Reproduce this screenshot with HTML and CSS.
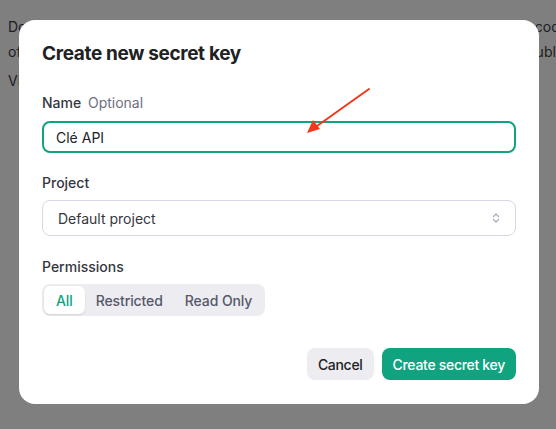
FILE: index.html
```html
<!DOCTYPE html>
<html>
<head>
<meta charset="utf-8">
<link rel="stylesheet" href="styles.css">
</head>
<body>
<div class="page">
  <p class="bg-line bg-line-1"><span>Do not share your API key with others, or expose it in the browser</span><span>code.</span></p>
  <p class="bg-line bg-line-2"><span>of your account, OpenAI may automatically disable any API key that</span><span>publicly.</span></p>
  <p class="bg-line bg-para"><span>View usage per API key on the Usage page.</span></p>
</div>
<div class="overlay">
  <div class="modal">
    <h1 class="title">Create new secret key</h1>
    <div class="field field-name">
      <div class="label">Name <span class="optional">Optional</span></div>
      <div class="input">Clé API</div>
    </div>
    <div class="field field-project">
      <div class="label">Project</div>
      <div class="select">
        <span>Default project</span>
        <svg class="chev" width="10" height="14" viewBox="0 0 10 14"><path d="M2.5 5.5 L5 3 L7.5 5.5 M2.5 8.5 L5 11 L7.5 8.5" fill="none" stroke="#a9a9bd" stroke-width="1.2" stroke-linecap="round" stroke-linejoin="round"/></svg>
      </div>
    </div>
    <div class="field field-perm">
      <div class="label">Permissions</div>
      <div class="segmented">
        <span class="seg seg-active">All</span>
        <span class="seg">Restricted</span>
        <span class="seg">Read Only</span>
      </div>
    </div>
    <div class="actions">
      <button class="btn btn-cancel">Cancel</button>
      <button class="btn btn-primary">Create secret key</button>
    </div>
  </div>
  <svg class="arrow" width="556" height="429" viewBox="0 0 556 429">
    <line x1="369" y1="89" x2="317" y2="126" stroke="#f5371c" stroke-width="2" stroke-linecap="round"/>
    <polygon points="307,133 313,120 320,129" fill="#f5371c"/>
  </svg>
</div>
</body>
</html>
```
FILE: styles.css
```css
html, body {
  margin: 0;
  padding: 0;
  width: 556px;
  height: 429px;
  overflow: hidden;
  font-family: Inter, "Noto Sans", "Liberation Sans", sans-serif;
}
body {
  background: #ffffff;
  position: relative;
}
.page {
  padding: 14px 8px;
}
.bg-line {
  margin: 0;
  font-size: 14px;
  line-height: 25px;
  color: #3c3c44;
  white-space: nowrap;
  display: flex;
  justify-content: space-between;
}
.bg-line-1 { width: 564px; }
.bg-line-2 { width: 574px; }
.bg-para {
  margin-top: 4px;
}
.overlay {
  position: absolute;
  inset: 0;
  background: rgba(0, 0, 0, 0.5);
}
.modal {
  position: absolute;
  left: 19px;
  top: 20px;
  width: 520px;
  box-sizing: border-box;
  height: 384px;
  background: #ffffff;
  border-radius: 16px;
  padding: 20px 23px 24px;
  display: flex;
  flex-direction: column;
}
.title {
  margin: 0;
  font-size: 19px;
  line-height: 28px;
  font-weight: 700;
  color: #202123;
  letter-spacing: -0.35px;
}
.field {
  display: flex;
  flex-direction: column;
  gap: 8px;
}
.field-name { margin-top: 25px; }
.field-project { margin-top: 20px; gap: 7px; }
.field-perm { margin-top: 21px; gap: 7px; }
.label {
  font-size: 14px;
  line-height: 20px;
  font-weight: 500;
  color: #353740;
}
.optional {
  font-weight: 400;
  color: #6e6e80;
  margin-left: 3px;
}
.input {
  height: 32px;
  box-sizing: border-box;
  border: 2px solid #10a37f;
  border-radius: 8px;
  padding: 0 12px;
  display: flex;
  align-items: center;
  font-size: 14px;
  color: #202123;
}
.select {
  height: 36px;
  box-sizing: border-box;
  border: 1px solid #d9d9e3;
  border-radius: 8px;
  padding: 0 14px 0 15px;
  display: flex;
  align-items: center;
  justify-content: space-between;
  font-size: 14px;
  color: #353740;
}
.chev { display: block; }
.segmented {
  align-self: flex-start;
  display: flex;
  background: #ececf1;
  border-radius: 8px;
  padding: 2px 2px;
  height: 32px;
  box-sizing: border-box;
}
.seg {
  display: flex;
  align-items: center;
  padding: 0 11px;
  font-size: 14px;
  font-weight: 500;
  color: #565869;
  border-radius: 6px;
  letter-spacing: -0.1px;
}
.seg-active {
  background: #ffffff;
  color: #10a37f;
  padding: 0 12px;
  box-shadow: 0 1px 2px rgba(0, 0, 0, 0.12);
}
.actions {
  margin-top: auto;
  display: flex;
  justify-content: flex-end;
  gap: 8px;
}
.btn {
  height: 32px;
  border: none;
  border-radius: 8px;
  padding: 0 11px;
  font-family: inherit;
  font-size: 14px;
  font-weight: 500;
  letter-spacing: -0.3px;
}
.btn-cancel {
  background: #ececf1;
  color: #202123;
  padding: 0 11px;
}
.btn-primary {
  background: #10a37f;
  color: #ffffff;
}
.arrow {
  position: absolute;
  left: 0;
  top: 0;
  pointer-events: none;
}
```
